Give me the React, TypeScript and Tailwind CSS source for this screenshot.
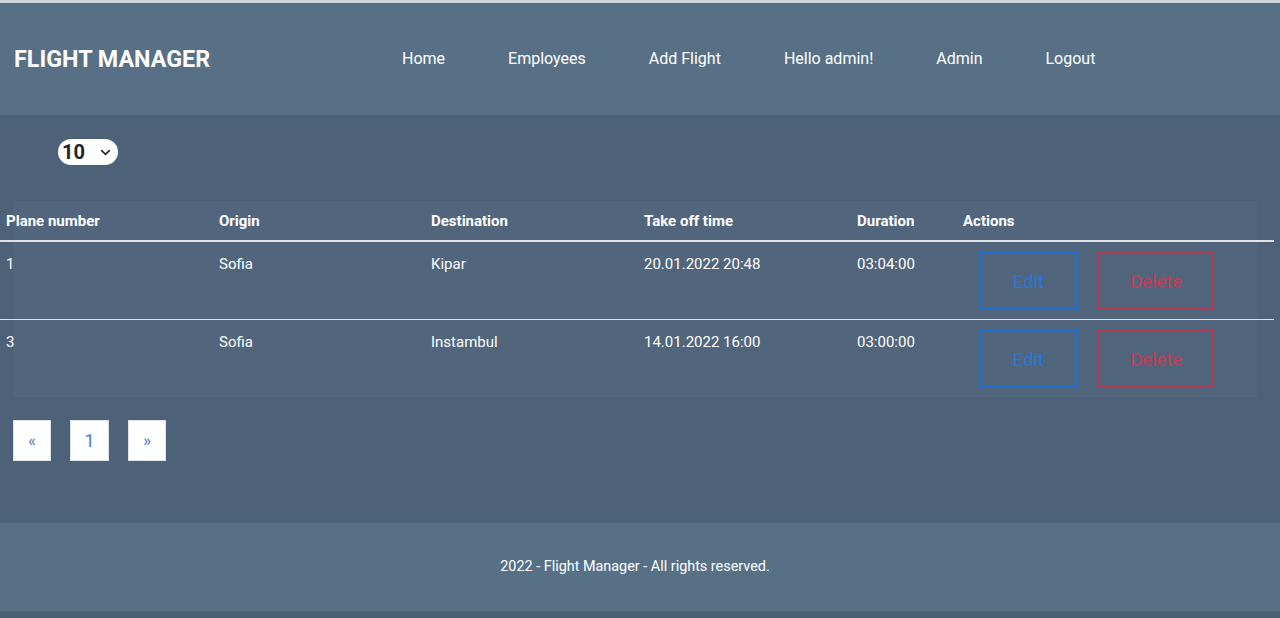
import { ChevronDown } from 'lucide-react'

const flights = [
  { plane: '1', origin: 'Sofia', destination: 'Kipar', takeOff: '20.01.2022 20:48', duration: '03:04:00' },
  { plane: '3', origin: 'Sofia', destination: 'Instambul', takeOff: '14.01.2022 16:00', duration: '03:00:00' },
]

const navItems = ['Home', 'Employees', 'Add Flight', 'Hello admin!', 'Admin', 'Logout']

export default function App() {
  return (
    <div className="h-[618px] flex flex-col bg-[#4d6278] text-white font-['Roboto',sans-serif] overflow-hidden">
      {/* Top strip */}
      <div className="h-[3px] bg-[#cdd4db] shrink-0" />

      {/* Header */}
      <header className="h-[112px] shrink-0 bg-[#577086] flex items-center">
        <h1 className="pl-[14px] w-[402px] text-[23.3px] font-bold mt-[1px]">FLIGHT MANAGER</h1>
        <nav className="flex items-center gap-[63px] text-[16px]">
          {navItems.map((item) => (
            <a key={item} href="#" className="text-white">
              {item}
            </a>
          ))}
        </nav>
      </header>

      {/* Main */}
      <main className="flex-1 flex flex-col">
        <div className="pt-[24px] pl-[58px] h-[86px]">
          <div className="w-[60px] h-[26px] bg-white rounded-full flex items-center pl-[4px] pr-[5px] justify-between text-[#212529]">
            <span className="text-[20px] font-bold leading-none">10</span>
            <ChevronDown size={15} strokeWidth={2.6} />
          </div>
        </div>

        {/* Table */}
        <div className="ml-[13px] w-[1244px] bg-[#51667c]">
          <table className="-ml-[13px] w-[1274px] table-fixed border-collapse text-left">
            <thead>
              <tr className="h-[40px] text-[15px] font-bold">
                <th className="w-[213px] pl-[6px] pt-[1px] font-bold">Plane number</th>
                <th className="w-[213px] pl-[6px] pt-[1px] font-bold">Origin</th>
                <th className="w-[213px] pl-[5px] pt-[1px] font-bold">Destination</th>
                <th className="w-[213px] pl-[5px] pt-[1px] font-bold">Take off time</th>
                <th className="w-[106px] pl-[5px] pt-[1px] font-bold">Duration</th>
                <th className="pl-[5px] pt-[1px] font-bold">Actions</th>
              </tr>
            </thead>
            <tbody className="text-[15px]">
              {flights.map((f, i) => (
                <tr key={f.plane} className={i === 0 ? 'border-t-2 border-[#dfe3e7]' : 'border-t border-[#dfe3e7]'}>
                  <td className="pl-[6px] align-top pt-[11px]">{f.plane}</td>
                  <td className="pl-[6px] align-top pt-[11px]">{f.origin}</td>
                  <td className="pl-[5px] align-top pt-[11px]">{f.destination}</td>
                  <td className="pl-[5px] align-top pt-[11px]">{f.takeOff}</td>
                  <td className="pl-[5px] align-top pt-[11px]">{f.duration}</td>
                  <td className="pl-[22px] py-[9px]">
                    <div className="flex gap-[21px]">
                      <button className="w-[97px] h-[59px] border-2 border-[#1f6fd6] text-[#2b76dc] text-[18.5px] pt-[4px]">
                        Edit
                      </button>
                      <button className="w-[116px] h-[59px] border-2 border-[#b33a52] text-[#c33c55] text-[18.5px] pt-[4px]">
                        Delete
                      </button>
                    </div>
                  </td>
                </tr>
              ))}
            </tbody>
          </table>
        </div>

        {/* Pagination */}
        <div className="flex gap-[19px] pl-[13px] mt-[23px]">
          <a href="#" className="w-[38px] h-[41px] bg-white border border-[#dee2e6] flex items-center justify-center text-[#4f7ac4] text-[17px]">«</a>
          <a href="#" className="w-[39px] h-[41px] bg-white border border-[#dee2e6] flex items-center justify-center text-[#4f7ac4] text-[18px]">1</a>
          <a href="#" className="w-[38px] h-[41px] bg-white border border-[#dee2e6] flex items-center justify-center text-[#4f7ac4] text-[17px]">»</a>
        </div>
      </main>

      {/* Footer */}
      <footer className="h-[88px] shrink-0 bg-[#577086] flex items-center justify-center pr-[10px] text-[14.4px]">
        2022 - Flight Manager - All rights reserved.
      </footer>
      <div className="h-[7px] shrink-0 bg-[#4b5f74]" />
    </div>
  )
}
